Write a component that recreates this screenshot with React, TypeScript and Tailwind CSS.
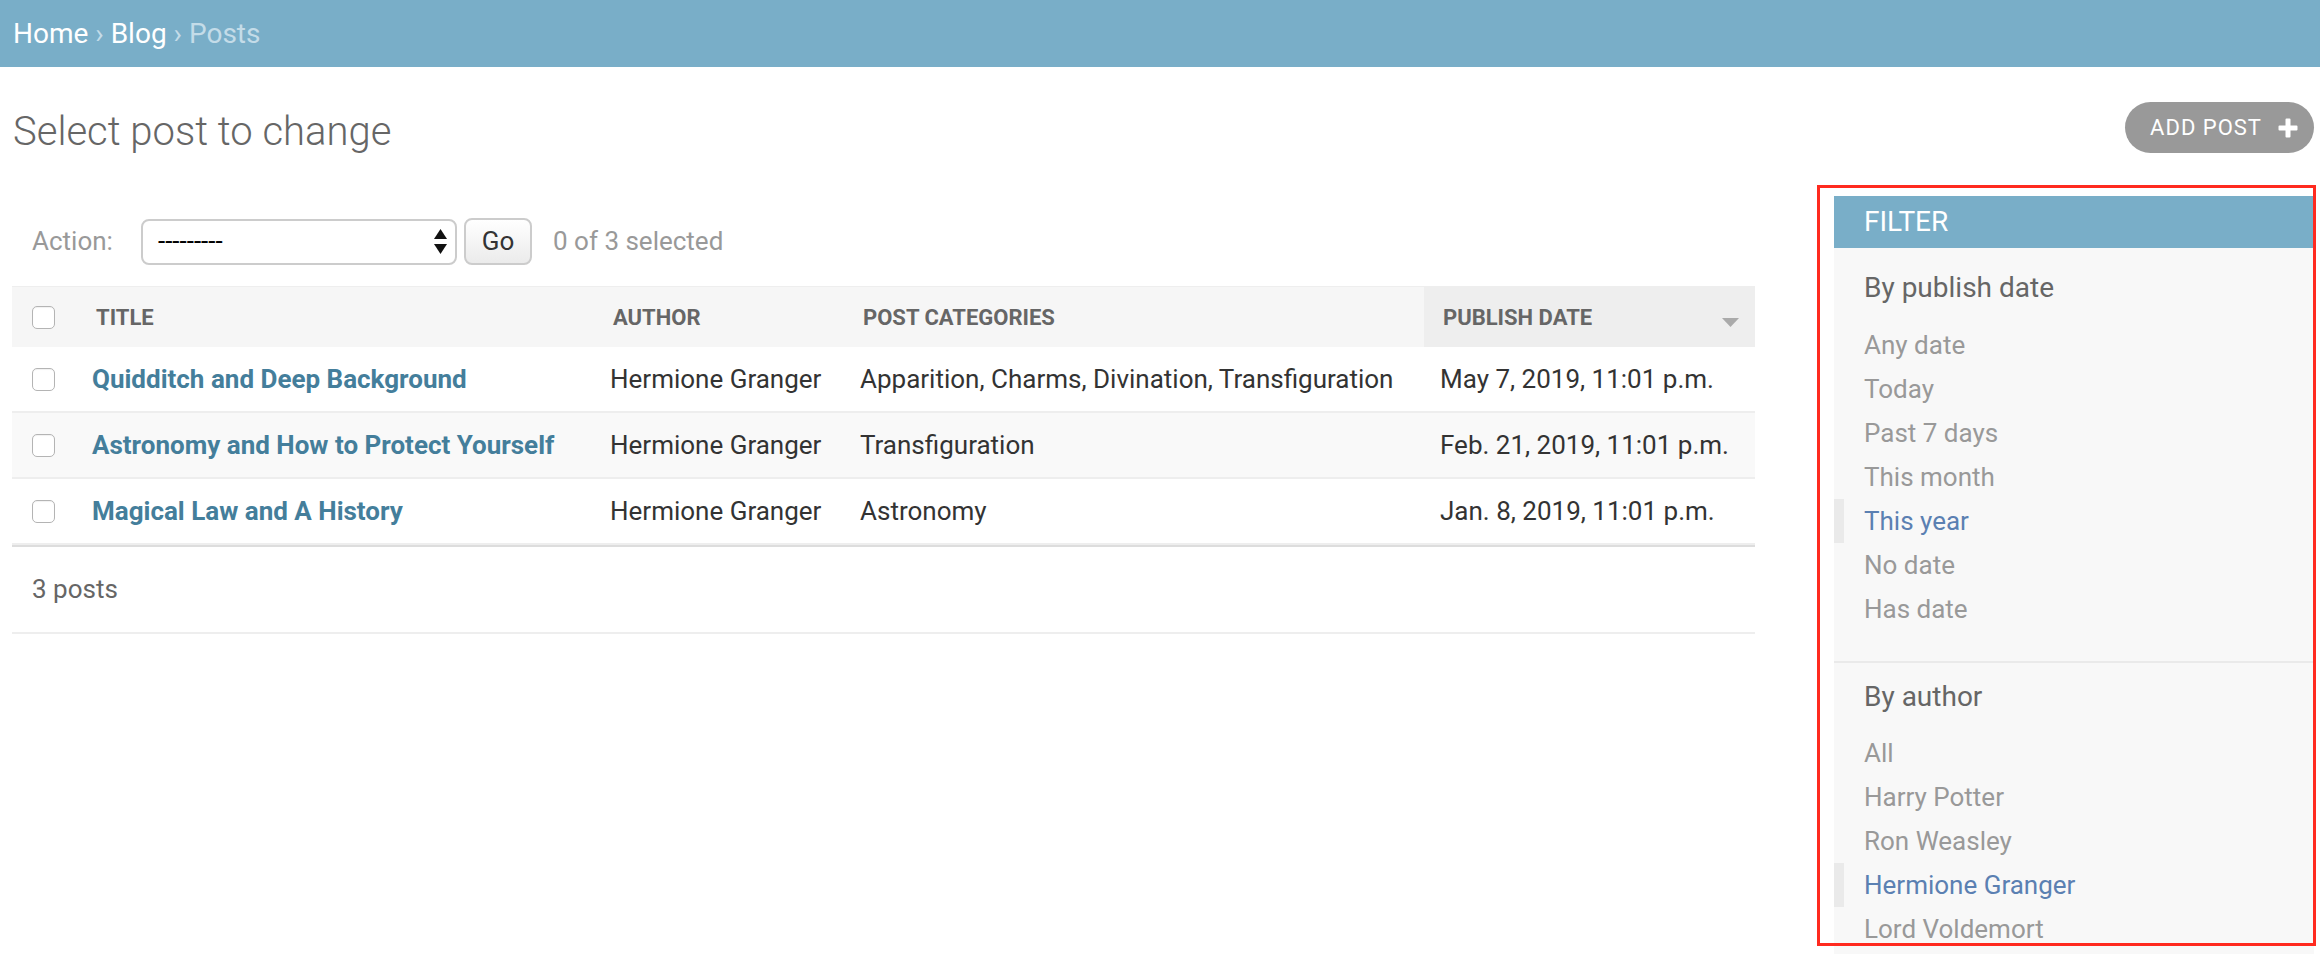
const posts = [
  {
    title: "Quidditch and Deep Background",
    author: "Hermione Granger",
    categories: "Apparition, Charms, Divination, Transfiguration",
    date: "May 7, 2019, 11:01 p.m.",
  },
  {
    title: "Astronomy and How to Protect Yourself",
    author: "Hermione Granger",
    categories: "Transfiguration",
    date: "Feb. 21, 2019, 11:01 p.m.",
  },
  {
    title: "Magical Law and A History",
    author: "Hermione Granger",
    categories: "Astronomy",
    date: "Jan. 8, 2019, 11:01 p.m.",
  },
];

const dateFilters = ["Any date", "Today", "Past 7 days", "This month", "This year", "No date", "Has date"];
const authorFilters = ["All", "Harry Potter", "Ron Weasley", "Hermione Granger", "Lord Voldemort"];

const Checkbox = () => (
  <div className="w-[23px] h-[23px] rounded-[5px] border-[1.5px] border-[#b4b4b4] bg-white shadow-[inset_0_1px_1px_rgba(0,0,0,0.06)]" />
);

const FilterSection = ({
  title,
  items,
  selected,
  first,
}: {
  title: string;
  items: string[];
  selected: string;
  first?: boolean;
}) => (
  <div>
    <h3
      className={`${first ? "mt-[23px]" : "mt-[17px]"} pl-[30px] text-[28px] leading-[34px] text-[#666]`}
    >
      {title}
    </h3>
    <ul className={`${first ? "mt-[18px]" : "mt-[17px]"} pb-[30px] border-b-2 border-[#eaeaea]`}>
      {items.map((item) => (
        <li
          key={item}
          className={
            item === selected
              ? "py-[2px] pl-[20px] border-l-[10px] border-[#eaeaea] text-[26px] leading-[40px] text-[#5b80b2]"
              : "py-[2px] pl-[30px] text-[26px] leading-[40px] text-[#999]"
          }
        >
          {item}
        </li>
      ))}
    </ul>
  </div>
);

export default function App() {
  return (
    <div className="relative w-[2320px] h-[954px] overflow-hidden bg-white font-['Roboto',sans-serif] text-[#333]">
      {/* breadcrumbs */}
      <div className="h-[67px] bg-[#79aec8] flex items-center px-[13px] text-[28px] text-[#c4dce8]">
        <span className="text-white">Home</span>
        <span className="whitespace-pre"> › </span>
        <span className="text-white">Blog</span>
        <span className="whitespace-pre"> › </span>
        <span>Posts</span>
      </div>

      <div className="pl-[12px] pr-[6px]">
        <div className="flex justify-between items-start pt-[35px]">
          <h1 className="mt-[6px] ml-[1px] text-[40px] leading-[48px] font-light text-[#666]">
            Select post to change
          </h1>
          <button className="h-[51px] flex items-center rounded-full bg-[#999] pl-[25px] pr-[16px] text-[22px] tracking-[1px] text-white">
            ADD POST
            <svg className="ml-[16px]" width="20" height="20" viewBox="0 0 20 20">
              <path d="M7.5 1.5a1 1 0 0 1 1-1h3a1 1 0 0 1 1 1v6h6a1 1 0 0 1 1 1v3a1 1 0 0 1-1 1h-6v6a1 1 0 0 1-1 1h-3a1 1 0 0 1-1-1v-6h-6a1 1 0 0 1-1-1v-3a1 1 0 0 1 1-1h6z" fill="#fff" />
            </svg>
          </button>
        </div>

        <div className="flex mt-[40px]">
          {/* change list */}
          <div className="flex-1 mr-[79px]">
            <div className="mt-[22px] h-[47px] flex items-center pl-[20px] text-[26px]">
              <span className="w-[109px] text-[#999]">Action:</span>
              <div className="w-[316px] h-[46px] rounded-[8px] border-2 border-[#ccc] bg-white flex items-center justify-between pl-[15px] pr-[8px]">
                <span className="text-black text-[26px]">---------</span>
                <svg width="13" height="25" viewBox="0 0 13 25">
                  <path d="M0 10 L6.5 0 L13 10 Z" fill="#111" />
                  <path d="M0 15 L13 15 L6.5 25 Z" fill="#111" />
                </svg>
              </div>
              <div className="ml-[7px] w-[68px] h-[47px] rounded-[8px] border-2 border-[#ccc] bg-linear-to-b from-white to-[#ebebeb] flex items-center justify-center text-[26px] text-[#333]">
                Go
              </div>
              <span className="ml-[21px] text-[#999]">0 of 3 selected</span>
            </div>

            <div className="mt-[21px]">
              <div className="grid grid-cols-[66px_518px_250px_578px_1fr] h-[61px] bg-[#f6f6f6] border-t border-[#eee] text-[22px] font-bold text-[#666] uppercase">
                <div className="flex items-center pl-[20px]">
                  <Checkbox />
                </div>
                <div className="flex items-center pl-[18px]">Title</div>
                <div className="flex items-center pl-[17px]">Author</div>
                <div className="flex items-center pl-[17px]">Post categories</div>
                <div className="flex items-center justify-between pl-[19px] pr-[16px] bg-[#eee]">
                  <span>Publish date</span>
                  <svg className="mt-[11px]" width="17" height="9" viewBox="0 0 17 9">
                    <path d="M0 0 L17 0 L8.5 9 Z" fill="#aaa" />
                  </svg>
                </div>
              </div>

              {posts.map((p, i) => (
                <div
                  key={p.title}
                  className={`grid grid-cols-[66px_518px_250px_578px_1fr] h-[66px] border-b-2 border-[#eee] text-[26px] ${
                    i % 2 === 1 ? "bg-[#f9f9f9]" : "bg-white"
                  }`}
                >
                  <div className="flex items-center pl-[20px]">
                    <Checkbox />
                  </div>
                  <div className="flex items-center pl-[14px] font-bold text-[#447e9b] whitespace-nowrap">
                    {p.title}
                  </div>
                  <div className="flex items-center pl-[14px] whitespace-nowrap">{p.author}</div>
                  <div className="flex items-center pl-[14px] whitespace-nowrap">{p.categories}</div>
                  <div className="flex items-center pl-[16px] whitespace-nowrap">{p.date}</div>
                </div>
              ))}

              <div className="h-[89px] border-t-2 border-[#ddd] border-b-2 border-b-[#eee] flex items-center pl-[20px] text-[26px] text-[#666]">
                3 posts
              </div>
            </div>
          </div>

          {/* filter sidebar */}
          <aside className="w-[480px] h-[800px] bg-[#f8f8f8]">
            <h2 className="h-[52px] flex items-center pl-[30px] bg-[#79aec8] text-[28px] text-white">
              FILTER
            </h2>
            <FilterSection title="By publish date" items={dateFilters} selected="This year" first />
            <FilterSection title="By author" items={authorFilters} selected="Hermione Granger" />
          </aside>
        </div>
      </div>

      {/* annotation outline */}
      <div className="absolute left-[1817px] top-[185px] w-[499px] h-[761px] border-[3px] border-[#ff2a1f] pointer-events-none" />
    </div>
  );
}
